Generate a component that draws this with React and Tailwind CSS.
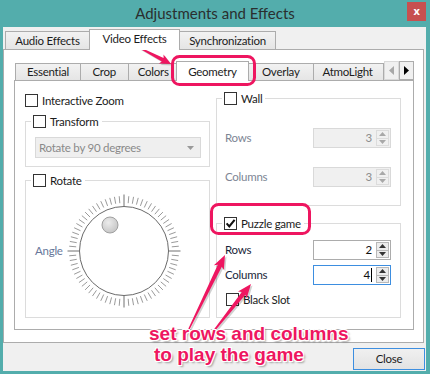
import React from 'react';

const PINK = '#ee1660';

function Check({ checked }) {
  return (
    <span className="flex h-[13px] w-[13px] shrink-0 items-center justify-center border border-[#333333] bg-white">
      {checked && (
        <svg width="11" height="11" viewBox="0 0 11 11">
          <path d="M1.6 5.4 L4.3 8.4 L9.6 1.8" fill="none" stroke="#111" strokeWidth="2.1" />
        </svg>
      )}
    </span>
  );
}

function Group({ label, checked, className, children }) {
  return (
    <div className={`border border-[#dcdcdc] ${className}`}>
      <div className="-mt-[8px] ml-[5px] flex h-[15px] w-fit items-center gap-[4px] bg-white pl-[2px] pr-[3px]">
        <Check checked={checked} />
        <span className="text-[#1c1c1c]">{label}</span>
      </div>
      {children}
    </div>
  );
}

function Tri({ up, color }) {
  return (
    <svg width="7" height="4" viewBox="0 0 7 4">
      <polygon points={up ? '0,4 3.5,0 7,4' : '0,0 3.5,4 7,0'} fill={color} />
    </svg>
  );
}

function Spin({ value, disabled, focused }) {
  const box = disabled
    ? 'flex h-[20px] w-[78px] border border-[#d9d9d9] bg-[#f0f0f0]'
    : focused
      ? 'flex h-[20px] w-[78px] border border-[#3d8ee0] bg-white'
      : 'flex h-[20px] w-[78px] border border-[#acacac] bg-white';
  const tri = disabled ? '#a8a8a8' : '#333';
  return (
    <div className={box}>
      <div className={disabled ? 'flex flex-1 items-center justify-end pr-[4px] text-[#8d8d8d]' : 'flex flex-1 items-center justify-end pr-[4px] text-[#111]'}>
        {value}
        {focused && <span className="ml-[1px] h-[14px] w-px bg-black" />}
      </div>
      <div className="my-[1px] mr-[1px] flex w-[13px] flex-col">
        <div className={disabled ? 'flex flex-1 items-center justify-center border border-[#dcdcdc] bg-[#f0f0f0]' : 'flex flex-1 items-center justify-center border border-[#b8b8b8] bg-[#ececec]'}>
          <Tri up color={tri} />
        </div>
        <div className={disabled ? 'flex flex-1 items-center justify-center border border-t-0 border-[#dcdcdc] bg-[#f0f0f0]' : 'flex flex-1 items-center justify-center border border-t-0 border-[#b8b8b8] bg-[#ececec]'}>
          <Tri color={tri} />
        </div>
      </div>
    </div>
  );
}

function Dial() {
  const ticks = [];
  for (let i = 0; i < 72; i++) {
    const a = (i * 5 * Math.PI) / 180;
    const major = i % 18 === 0;
    const r1 = major ? 45 : 48;
    const r2 = major ? 56.5 : 55;
    ticks.push(
      <line
        key={i}
        x1={60 + Math.sin(a) * r1}
        y1={60 - Math.cos(a) * r1}
        x2={60 + Math.sin(a) * r2}
        y2={60 - Math.cos(a) * r2}
        stroke={major ? '#707070' : '#9a9a9a'}
        strokeWidth="1"
      />
    );
  }
  return (
    <svg width="120" height="120" viewBox="0 0 120 120">
      <defs>
        <radialGradient id="knob" cx="0.4" cy="0.35" r="0.7">
          <stop offset="0" stopColor="#ececec" />
          <stop offset="1" stopColor="#c4c4c4" />
        </radialGradient>
      </defs>
      {ticks}
      <circle cx="60" cy="60" r="44.5" fill="white" stroke="#6a6a6a" strokeWidth="1" />
      <circle cx="46" cy="34" r="8" fill="url(#knob)" stroke="#a0a0a0" strokeWidth="1" />
    </svg>
  );
}

function arrow(x1, y1, x2, y2, w1, w2, hl, hw) {
  const dx = x2 - x1;
  const dy = y2 - y1;
  const L = Math.hypot(dx, dy);
  const ux = dx / L;
  const uy = dy / L;
  const nx = -uy;
  const ny = ux;
  const bx = x2 - ux * hl;
  const by = y2 - uy * hl;
  const nb = x2 - ux * hl * 0.85;
  const nby = y2 - uy * hl * 0.85;
  const pts = [
    [x1 + (nx * w1) / 2, y1 + (ny * w1) / 2],
    [nb + (nx * w2) / 2, nby + (ny * w2) / 2],
    [bx + (nx * hw) / 2, by + (ny * hw) / 2],
    [x2, y2],
    [bx - (nx * hw) / 2, by - (ny * hw) / 2],
    [nb - (nx * w2) / 2, nby - (ny * w2) / 2],
    [x1 - (nx * w1) / 2, y1 - (ny * w1) / 2],
  ];
  return pts.map((p) => p[0].toFixed(1) + ',' + p[1].toFixed(1)).join(' ');
}

function OuterTab({ label, selected, className }) {
  return selected ? (
    <div className={`relative z-10 -mb-px flex h-[21px] items-start justify-center border border-b-0 border-[#acacac] bg-white pt-[3px] ${className}`}>
      {label}
    </div>
  ) : (
    <div className={`flex h-[18px] items-center justify-center border border-b-0 border-[#acacac] bg-gradient-to-b from-[#f2f2f2] to-[#e5e5e5] ${className}`}>
      {label}
    </div>
  );
}

export default function App() {
  const arrows = [
    arrow(138, 47, 171, 64, 1.2, 4, 11, 10),
    arrow(189, 329, 225, 255, 1.5, 4.5, 14, 11),
    arrow(213, 332, 251, 284, 1.5, 4.5, 14, 11),
  ];
  return (
    <div className="relative flex h-[374px] w-[430px] flex-col overflow-hidden bg-[#53adac] font-['Lato',sans-serif] text-[11.5px] leading-none tracking-[-0.25px] text-[#1c1c1c]">
      <div className="grid h-[27px] grid-cols-[1fr_auto_1fr]">
        <div />
        <div className="flex items-center pb-[1px] text-[15px] tracking-normal text-[#2a2f2f]">Adjustments and Effects</div>
        <div className="flex items-start justify-end pr-[4px] pt-[2px]">
          <div className="flex h-[19px] w-[19px] items-center justify-center bg-[#c75050] pb-[2px] font-['Open_Sans',sans-serif] text-[11px] font-bold text-white">x</div>
        </div>
      </div>

      <div className="mb-[3px] ml-[3px] mr-[4px] flex flex-1 flex-col bg-[#f0f0f0]">
        <div className="mt-[2px] flex h-[20px] items-end pl-[2px]">
          <OuterTab label="Audio Effects" className="w-[85px]" />
          <OuterTab label="Video Effects" selected className="-ml-px w-[91px]" />
          <OuterTab label="Synchronization" className="-ml-px w-[97px]" />
        </div>

        <div className="mr-[2px] flex h-[294px] flex-col border border-[#acacac] bg-white">
          <div className="ml-[10px] mt-[11px] flex h-[19px] w-[400px] items-end">
            <div className="ml-px flex h-[17px] w-[66px] items-center justify-center border border-b-0 border-[#acacac] bg-gradient-to-b from-[#f2f2f2] to-[#e5e5e5]">Essential</div>
            <div className="-ml-px flex h-[17px] w-[49px] items-center justify-center border border-b-0 border-[#acacac] bg-gradient-to-b from-[#f2f2f2] to-[#e5e5e5]">Crop</div>
            <div className="-ml-px flex h-[17px] w-[51px] items-center justify-center border border-b-0 border-[#acacac] bg-gradient-to-b from-[#f2f2f2] to-[#e5e5e5]">Colors</div>
            <div className="relative z-10 -mb-px -ml-[3px] -mr-[2px] flex h-[20px] w-[74px] items-start justify-center border border-b-0 border-[#acacac] bg-white pt-[4px]">Geometry</div>
            <div className="flex h-[17px] w-[67px] items-center justify-center border border-b-0 border-[#acacac] bg-gradient-to-b from-[#f2f2f2] to-[#e5e5e5]">Overlay</div>
            <div className="-ml-px flex h-[17px] w-[71px] items-center justify-center border border-b-0 border-[#acacac] bg-gradient-to-b from-[#f2f2f2] to-[#e5e5e5] pr-[2px]">AtmoLight</div>
            <div className="ml-auto flex h-[19px]">
              <div className="flex w-[15px] items-center justify-center border border-[#d9d9d9] bg-[#f0f0f0]">
                <svg width="5" height="9" viewBox="0 0 5 9"><polygon points="5,0 0,4.5 5,9" fill="#a8a8a8" /></svg>
              </div>
              <div className="flex w-[15px] items-center justify-center border border-[#acacac] bg-[#f0f0f0]">
                <svg width="5" height="9" viewBox="0 0 5 9"><polygon points="0,0 5,4.5 0,9" fill="#000" /></svg>
              </div>
            </div>
          </div>

          <div className="ml-[10px] mr-[9px] flex h-[250px] gap-[6px] border border-[#acacac] bg-white pl-[10px]">
            <div className="flex w-[185px] flex-col">
              <div className="mt-[12px] flex h-[15px] items-center gap-[4px]">
                <Check />
                <span>Interactive Zoom</span>
              </div>
              <Group label="Transform" className="mt-[13px] h-[46px]">
                <div className="ml-[9px] mt-[8px] flex h-[21px] w-[166px] items-center justify-between border border-[#d9d9d9] bg-[#efefef] pl-[3px] pr-[6px] text-[#8a8a8a]">
                  <span>Rotate by 90 degrees</span>
                  <svg width="7" height="4" viewBox="0 0 7 4"><polygon points="0,0 3.5,4 7,0" fill="#9a9a9a" /></svg>
                </div>
              </Group>
              <Group label="Rotate" className="mt-[13px] h-[138px]">
                <div className="mt-[3px] flex items-center">
                  <span className="w-[38px] pl-[9px] text-[#67779a]">Angle</span>
                  <Dial />
                </div>
              </Group>
            </div>

            <div className="flex w-[185px] flex-col">
              <Group label="Wall" className="mt-[17px] h-[108px]">
                <div className="mt-[22px] flex items-center justify-between pl-[8px] pr-[9px]">
                  <span className="text-[#7d8594]">Rows</span>
                  <Spin value="3" disabled />
                </div>
                <div className="mt-[19px] flex items-center justify-between pl-[8px] pr-[9px]">
                  <span className="text-[#7d8594]">Columns</span>
                  <Spin value="3" disabled />
                </div>
              </Group>
              <Group label="Puzzle game" checked className="mt-[17px] h-[95px]">
                <div className="mt-[9px] flex items-center justify-between pl-[8px] pr-[9px]">
                  <span className="text-[#1a1f3a]">Rows</span>
                  <Spin value="2" />
                </div>
                <div className="mt-[5px] flex items-center justify-between pl-[8px] pr-[9px]">
                  <span className="text-[#1a1f3a]">Columns</span>
                  <Spin value="4" focused />
                </div>
                <div className="ml-[9px] mt-[7px] flex h-[15px] items-center gap-[4px]">
                  <Check />
                  <span>Black Slot</span>
                </div>
              </Group>
            </div>
          </div>
        </div>

        <div className="flex flex-1 items-start justify-end pr-[1px] pt-[5px]">
          <button className="flex h-[22px] w-[72px] items-center justify-center border border-[#3d8ee0] bg-gradient-to-b from-[#f0f0f0] to-[#e3e3e3] text-[#1c1c1c]">
            Close
          </button>
        </div>
      </div>

      <svg className="pointer-events-none absolute left-0 top-0" width="430" height="374" viewBox="0 0 430 374">
        {arrows.map((p, i) => (
          <polygon key={'s' + i} points={p} fill="#000" opacity="0.18" transform="translate(1.5 1.5)" />
        ))}
        {arrows.map((p, i) => (
          <polygon key={i} points={p} fill={PINK} />
        ))}
        <rect x="172.5" y="56.5" width="82" height="28" rx="7" fill="none" stroke={PINK} strokeWidth="3" />
        <rect x="211.5" y="204.5" width="98" height="29" rx="7" fill="none" stroke={PINK} strokeWidth="3" />
      </svg>

      <div className="absolute left-[149px] top-[323px] font-['Liberation_Sans',Arial,sans-serif] text-[19px] font-bold leading-[21px] tracking-normal text-[#ee1660] [text-shadow:1px_1px_0_#fff,-1px_-1px_0_#fff,1px_-1px_0_#fff,-1px_1px_0_#fff,2px_2px_2px_rgba(0,0,0,0.35)]">
        <div>set rows and columns</div>
        <div className="ml-[5px]">to play the game</div>
      </div>
    </div>
  );
}
